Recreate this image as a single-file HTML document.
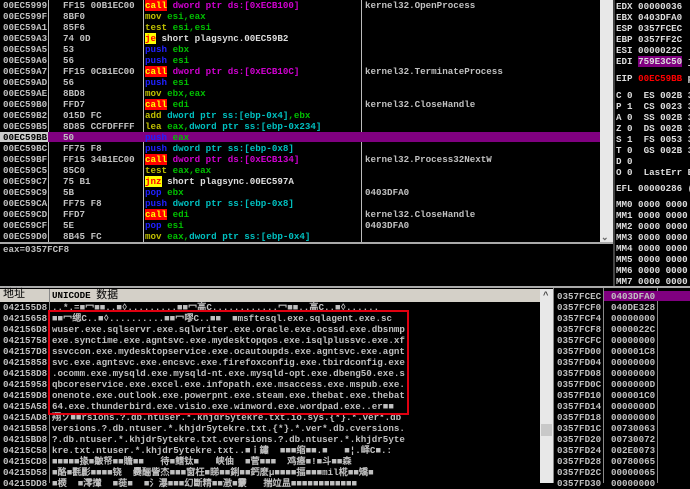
<!DOCTYPE html><html><head><meta charset="utf-8"><style>
*{margin:0;padding:0;box-sizing:border-box}
body{width:690px;height:483px;background:#000;overflow:hidden;position:relative;font-family:"Liberation Mono","WenQuanYi Zen Hei",monospace;font-size:9.2px;font-weight:bold;color:#c0c0c0}
.a{position:absolute;white-space:pre;line-height:11px;height:11px}
.r{position:absolute;left:0;width:600px;height:11px}
.c{background:#f00;color:#ff0}.j{background:#ff0;color:#f00}
.b{color:#2020ff}.y{color:#c0c000}.g{color:#00c000}.m{color:#d000d0}.cy{color:#00c0c0}.w{color:#ddd}
.vl{position:absolute;background:#bbb;width:1px}
</style></head><body>
<!-- disasm -->
<div class="vl" style="left:48px;top:0;height:242px"></div>
<div class="vl" style="left:143px;top:0;height:242px"></div>
<div class="vl" style="left:361px;top:0;height:242px"></div>
<div style="position:absolute;left:0;top:132px;width:600px;height:10px;background:#800080"></div>
<div style="position:absolute;left:0;top:132px;width:48px;height:10px;background:#ccc"></div>
<div style="position:absolute;left:600px;top:0;width:13px;height:242px;background:#e8e8e8"></div>
<div class="a" style="left:601px;top:232px;color:#666">⌄</div>
<div style="position:absolute;left:0;top:242px;width:613px;height:2px;background:#aaa"></div>
<div id="d"></div>
<div class="a" style="left:3px;top:244px">eax=0357FCF8</div>
<!-- registers -->
<div style="position:absolute;left:613px;top:0;width:2px;height:288px;background:#444"></div>
<div class="a w" style="left:616px;top:1px;line-height:11px;height:auto">EDX 00000036
EBX 0403DFA0
ESP 0357FCEC
EBP 0357FF2C
ESI 0000022C
EDI <span style="background:#800080">759E3C50</span> j</div>
<div class="a w" style="left:616px;top:73px">EIP <span style="color:#f00">00EC59BB</span> p</div>
<div class="a w" style="left:616px;top:90px;height:auto">C 0  ES 002B 3
P 1  CS 0023 3
A 0  SS 002B 3
Z 0  DS 002B 3
S 1  FS 0053 3
T 0  GS 002B 3
D 0
O 0  LastErr E</div>
<div class="a w" style="left:616px;top:183px">EFL 00000286 (</div>
<div class="a w" style="left:616px;top:199px;height:auto">MM0 0000 0000
MM1 0000 0000
MM2 0000 0000
MM3 0000 0000
MM4 0000 0000
MM5 0000 0000
MM6 0000 0000
MM7 0000 0000</div>
<div style="position:absolute;left:0;top:286px;width:690px;height:2px;background:#aaa"></div>
<!-- dump -->
<div style="position:absolute;left:0;top:289px;width:540px;height:13px;background:#d4d0c8;color:#000;font-weight:normal"></div>
<div class="a" style="left:3px;top:290px;color:#000;font-weight:normal;font-size:11px">地址</div>
<div class="a" style="left:52px;top:290px;color:#000">UNICODE <span style="font-weight:normal;font-size:11px">数据</span></div>
<div style="position:absolute;left:49px;top:289px;width:1px;height:194px;background:#888"></div>
<div style="position:absolute;left:540px;top:289px;width:13px;height:194px;background:#e8e8e8"></div>
<div class="a" style="left:543px;top:290px;color:#444">^</div>
<div style="position:absolute;left:541px;top:424px;width:11px;height:12px;background:#c8c8c8"></div>
<div id="u"></div>
<div style="position:absolute;left:48px;top:310px;width:361px;height:105px;border:2px solid #e00010"></div>
<!-- stack -->
<div style="position:absolute;left:553px;top:288px;width:1px;height:195px;background:#888"></div>
<div style="position:absolute;left:603px;top:288px;width:1px;height:195px;background:#888"></div>
<div style="position:absolute;left:657px;top:288px;width:1px;height:195px;background:#888"></div>
<div style="position:absolute;left:604px;top:291px;width:86px;height:10px;background:#800080"></div>
<div id="s"></div>
<script>
var D=[["00EC5999","FF15 00B1EC00",'<span class="c">call</span> <span class="m">dword ptr ds:[0xECB100]</span>',"kernel32.OpenProcess"],
["00EC599F","8BF0",'<span class="y">mov</span> <span class="g">esi,eax</span>',""],
["00EC59A1","85F6",'<span class="y">test</span> <span class="g">esi,esi</span>',""],
["00EC59A3","74 0D",'<span class="j">je</span> <span class="w">short plagsync.00EC59B2</span>',""],
["00EC59A5","53",'<span class="b">push</span> <span class="g">ebx</span>',""],
["00EC59A6","56",'<span class="b">push</span> <span class="g">esi</span>',""],
["00EC59A7","FF15 0CB1EC00",'<span class="c">call</span> <span class="m">dword ptr ds:[0xECB10C]</span>',"kernel32.TerminateProcess"],
["00EC59AD","56",'<span class="b">push</span> <span class="g">esi</span>',""],
["00EC59AE","8BD8",'<span class="y">mov</span> <span class="g">ebx,eax</span>',""],
["00EC59B0","FFD7",'<span class="c">call</span> <span class="g">edi</span>',"kernel32.CloseHandle"],
["00EC59B2","015D FC",'<span class="y">add</span> <span class="cy">dword ptr ss:[ebp-0x4]</span><span class="g">,ebx</span>',""],
["00EC59B5","8D85 CCFDFFFF",'<span class="y">lea</span> <span class="g">eax,</span><span class="cy">dword ptr ss:[ebp-0x234]</span>',""],
["00EC59BB","50",'<span class="b">push</span> <span class="g">eax</span>',""],
["00EC59BC","FF75 F8",'<span class="b">push</span> <span class="cy">dword ptr ss:[ebp-0x8]</span>',""],
["00EC59BF","FF15 34B1EC00",'<span class="c">call</span> <span class="m">dword ptr ds:[0xECB134]</span>',"kernel32.Process32NextW"],
["00EC59C5","85C0",'<span class="y">test</span> <span class="g">eax,eax</span>',""],
["00EC59C7","75 B1",'<span class="j">jnz</span> <span class="w">short plagsync.00EC597A</span>',""],
["00EC59C9","5B",'<span class="b">pop</span> <span class="g">ebx</span>',"0403DFA0"],
["00EC59CA","FF75 F8",'<span class="b">push</span> <span class="cy">dword ptr ss:[ebp-0x8]</span>',""],
["00EC59CD","FFD7",'<span class="c">call</span> <span class="g">edi</span>',"kernel32.CloseHandle"],
["00EC59CF","5E",'<span class="b">pop</span> <span class="g">esi</span>',"0403DFA0"],
["00EC59D0","8B45 FC",'<span class="y">mov</span> <span class="g">eax,</span><span class="cy">dword ptr ss:[ebp-0x4]</span>',""]];
var h="";D.forEach(function(r,i){var t=i*11;var ac=i==12?"color:#000":"";
h+='<div class="a" style="left:3px;top:'+t+'px;'+ac+'">'+r[0]+'</div><div class="a" style="left:63px;top:'+t+'px">'+r[1]+'</div><div class="a" style="left:145px;top:'+t+'px">'+r[2]+'</div><div class="a" style="left:365px;top:'+t+'px">'+r[3]+'</div>';});
document.getElementById("d").innerHTML=h;
var U=[["042155D8","..*.=■冖■■..■◊.........■■冖高C............冖■■..高C..■◊......"],
["04215658","■■冖缌C..■◊..........■■冖嘐C..■■  ■msftesql.exe.sqlagent.exe.sc"],
["042156D8","wuser.exe.sqlservr.exe.sqlwriter.exe.oracle.exe.ocssd.exe.dbsnmp."],
["04215758","exe.synctime.exe.agntsvc.exe.mydesktopqos.exe.isqlplussvc.exe.xf"],
["042157D8","ssvccon.exe.mydesktopservice.exe.ocautoupds.exe.agntsvc.exe.agnt"],
["04215858","svc.exe.agntsvc.exe.encsvc.exe.firefoxconfig.exe.tbirdconfig.exe"],
["042158D8",".ocomm.exe.mysqld.exe.mysqld-nt.exe.mysqld-opt.exe.dbeng50.exe.s"],
["04215958","qbcoreservice.exe.excel.exe.infopath.exe.msaccess.exe.mspub.exe."],
["042159D8","onenote.exe.outlook.exe.powerpnt.exe.steam.exe.thebat.exe.thebat"],
["04215A58","64.exe.thunderbird.exe.visio.exe.winword.exe.wordpad.exe..er■■  "],
["04215AD8","翔ソ■■rsions.?.db.ntuser.*.khjdr5ytekre.txt.io.sys.{*}.*.ver*.db"],
["04215B58","versions.?.db.ntuser.*.khjdr5ytekre.txt.{*}.*.ver*.db.cversions."],
["04215BD8","?.db.ntuser.*.khjdr5ytekre.txt.cversions.?.db.ntuser.*.khjdr5yte"],
["04215C58","kre.txt.ntuser.*.khjdr5ytekre.txt..■ｉ鏽  ■■■缩■■.■   ■¦.峄C■.:"],
["04215CD8","■■■■■掾■皺帑■■贍■■   待■鳍钛■   峡伷  ■菅■■■  鸡瘗■!■斗■■森 "],
["04215D58","■酪■氍彲■■■■铙  爨酾訾杰■■■窗枉■睇■■鋓■■鈣麽μ■■■■揊■■■mil椛■■矯■"],
["04215DD8","■樮  ■澪攆  ■蓰■  ■氵瀑■■■幻斷精■■澂■靀   揣竝昷■■■■■■■■■■■■"]];
h="";U.forEach(function(r,i){var t=302+i*11;h+='<div class="a" style="left:3px;top:'+t+'px">'+r[0]+'</div><div class="a" style="left:52px;top:'+t+'px;width:487px;overflow:hidden">'+r[1]+'</div>';});
document.getElementById("u").innerHTML=h;
var S=[["0357FCEC","0403DFA0"],["0357FCF0","040DE328"],["0357FCF4","00000000"],["0357FCF8","0000022C"],["0357FCFC","00000000"],["0357FD00","000001C8"],["0357FD04","00000000"],["0357FD08","00000000"],["0357FD0C","0000000D"],["0357FD10","000001C0"],["0357FD14","0000000D"],["0357FD18","00000000"],["0357FD1C","00730063"],["0357FD20","00730072"],["0357FD24","002E0073"],["0357FD28","00780065"],["0357FD2C","00000065"],["0357FD30","00000000"]];
h="";S.forEach(function(r,i){var t=291+i*11;h+='<div class="a" style="left:557px;top:'+t+'px">'+r[0]+'</div><div class="a" style="left:611px;top:'+t+'px">'+r[1]+'</div>';});
document.getElementById("s").innerHTML=h;
</script></body></html>
